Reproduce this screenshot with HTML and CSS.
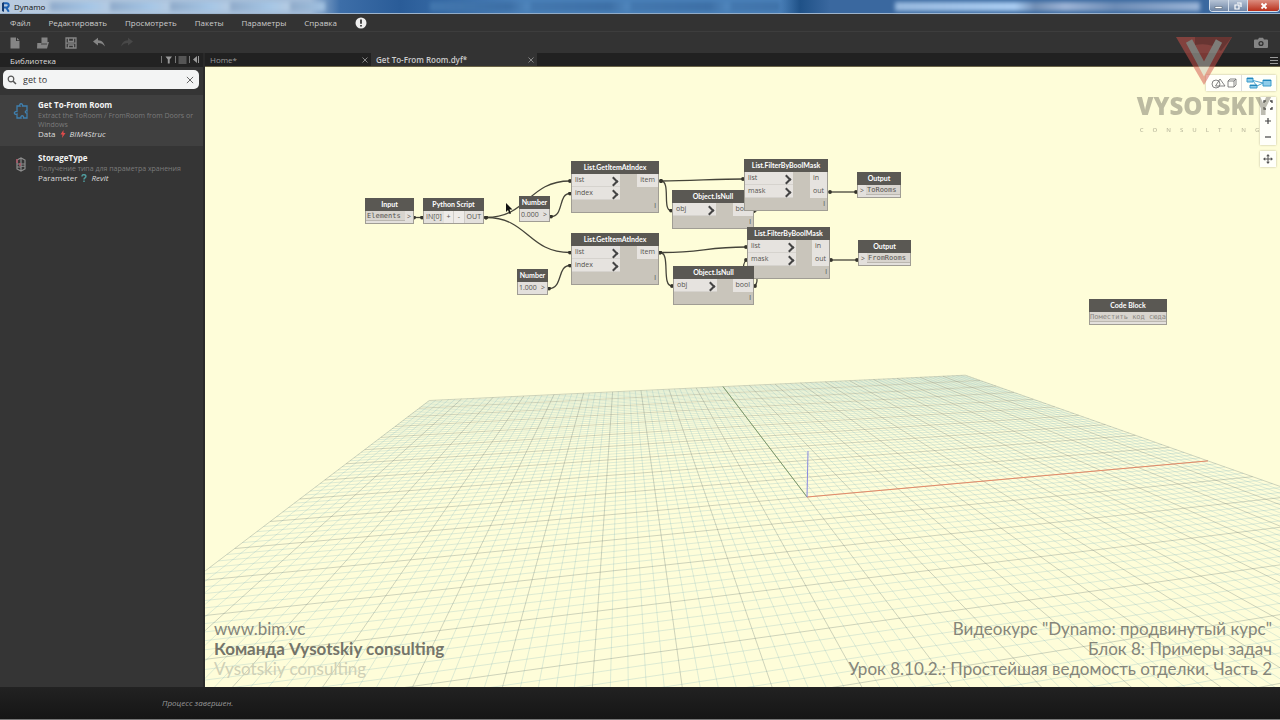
FILE: index.html
```
<!DOCTYPE html>
<html lang="ru">
<head>
  <meta charset="UTF-8">
  <title>Dynamo</title>
  <link rel="stylesheet" href="styles.css">
</head>
<body>
  <header class="titlebar">
    <svg class="app-icon" viewBox="0 0 10 12"><path d="M1 2l2-1v10l-2-1z" fill="#123a72"/><path d="M3 2.2h2.6a2 2 0 0 1 0 4.3H3M5.2 6.5l2.6 4.3" fill="none" stroke="#1d62b4" stroke-width="2"/></svg>
    <span class="app-name">Dynamo</span>
    <span class="glass glass-left"></span>
    <span class="glass glass-mid"></span>
    <span class="glass glass-right"></span>
    <div class="win-buttons">
      <button aria-label="Свернуть"><svg viewBox="0 0 10 8"><path d="M1 4.5h7v2H1z" fill="#fff" stroke="#456" stroke-width=".5"/></svg></button>
      <button aria-label="Развернуть"><svg viewBox="0 0 10 8"><path d="M4 1h4v4M2 3h4v4H2z" fill="none" stroke="#fff" stroke-width="1.2"/></svg></button>
      <button class="close" aria-label="Закрыть"><svg viewBox="0 0 10 8"><path d="M2.5 1.5l5 5M7.5 1.5l-5 5" stroke="#fff" stroke-width="1.8"/></svg></button>
    </div>
  </header>

  <nav class="menu">
    <a href="#">Файл</a>
    <a href="#">Редактировать</a>
    <a href="#">Просмотреть</a>
    <a href="#">Пакеты</a>
    <a href="#">Параметры</a>
    <a href="#">Справка</a>
    <a href="#" class="alert" aria-label="Уведомления"><svg viewBox="0 0 12 12"><circle cx="6" cy="6" r="5.5" fill="#eee"/><path d="M6 2.5v4.2M6 8v1.6" stroke="#222" stroke-width="1.6"/></svg></a>
  </nav>

  <div class="toolbar">
    <button aria-label="Создать"><svg viewBox="0 0 12 12"><path d="M1.5.5H7v3.5h3.5v7.500h-9z"/><path d="M8 .8l2.5 2.400H8z"/></svg></button>
    <button aria-label="Открыть"><svg viewBox="0 0 12 12"><path d="M4.500.500h6V5H12l-2 6.500H0L.300 6H4.500z"/><path d="M4 7h6" stroke="#333" stroke-width=".8"/></svg></button>
    <button aria-label="Сохранить"><svg viewBox="0 0 12 12"><path d="M1 1h10v10H1zM3.5 1v3.500h5V1M1 6.200h10M3.500 11V8h5v3" fill="none" stroke="#858585" stroke-width="1.3"/></svg></button>
    <button aria-label="Отменить"><svg viewBox="0 0 12 12"><path d="M0 4.500L5 .800v2.500c4 .200 6 2.500 7 6.200C10 7 8 6 5 6v2.500z"/></svg></button>
    <button class="off" aria-label="Повторить"><svg viewBox="0 0 12 12"><path d="M12 4.500L7 .800v2.500C3 3.500 1 5.800 0 9.500 2 7 4 6 7 6v2.500z"/></svg></button>
    <button class="camera" aria-label="Снимок"><svg viewBox="0 0 14 12"><path d="M1 2.500h3l1-1.800h4l1 1.800h3q1 0 1 1V10q0 1-1 1H1q-1 0-1-1V3.500q0-1 1-1z"/><circle cx="7" cy="6.5" r="2.6" fill="#333"/><circle cx="7" cy="6.5" r="1.2"/></svg></button>
  </div>

  <div class="main">
    <aside class="library">
      <div class="library-head">
        <h2>Библиотека</h2>
        <svg class="head-icons" viewBox="0 0 40 10">
          <path d="M1.5 1v7M15.5 1v7M29.5 1v7" stroke="#777" fill="none"/>
          <path d="M5.5 1.5h6.500L9.700 4.500V8.500H7.800V4.500z" fill="#999"/>
          <path d="M18.5 2h8M18.5 4h8M18.5 6h8M18.5 8h8" stroke="#888" fill="none"/>
          <path d="M37 1v7l-4-3.500zM38 1h1v7h-1z" fill="#999"/>
        </svg>
      </div>
      <label class="search">
        <svg viewBox="0 0 10 10"><circle cx="4" cy="4" r="2.8" fill="none" stroke="#555" stroke-width="1.2"/><path d="M6 6l3 3" stroke="#555" stroke-width="1.5"/></svg>
        <input type="text" value="get to" aria-label="Поиск">
        <button aria-label="Очистить"><svg viewBox="0 0 8 8"><path d="M1.5 1.5l5 5M6.5 1.5l-5 5" stroke="#666" stroke-width=".8"/></svg></button>
      </label>
      <ul class="results">
        <li class="selected">
          <svg class="thumb" viewBox="0 0 18 18"><path d="M5 4h3c-1.500-3 3.500-3 2.500 0H15v5c-2-1-2.500 2.500 0 2V16h-3.500c1-3-3.500-3-2.500 0H5v-4C2 13.500 1 9 5 9.500z" fill="none" stroke="#3f7fae" stroke-width="1.3"/></svg>
          <div>
            <h3>Get To-From Room</h3>
            <p class="descr">Extract the ToRoom / FromRoom from Doors or Windows</p>
            <p class="source">Data <svg viewBox="0 0 6 8"><path d="M3.500 0L.500 4.500h2L2 8l3.500-5H3.500z" fill="#e24b4b"/></svg> <i>BIM4Struc</i></p>
          </div>
        </li>
        <li>
          <svg class="thumb" viewBox="0 0 18 18"><path d="M5 5l4-2 4 2v9l-4 2-4-2zM9 3v13M5 9h8M5 12l8-1" fill="none" stroke="#8d8d8d" stroke-width="1.2"/><path d="M5 4v4M8 8v3" stroke="#b05567" stroke-width="1.5"/></svg>
          <div>
            <h3>StorageType</h3>
            <p class="descr">Получение типа для параметра хранения</p>
            <p class="source">Parameter <svg viewBox="0 0 6 8"><path d="M1 2.500C1-.500 5.500.500 4.800 2.800 4.500 4 3 3.800 3 5.500M3 6.500V8" fill="none" stroke="#4f9a9c" stroke-width="1.5"/></svg> <i>Revit</i></p>
          </div>
        </li>
      </ul>
    </aside>

    <section class="work">
      <div class="tabs">
        <div class="tab">Home*<button aria-label="Закрыть Home"><svg viewBox="0 0 8 8"><path d="M1.5 1.5l5 5M6.5 1.5l-5 5" stroke="#888"/></svg></button></div>
        <div class="tab active">Get To-From Room.dyf*<button aria-label="Закрыть Get To-From Room"><svg viewBox="0 0 8 8"><path d="M1.5 1.5l5 5M6.5 1.5l-5 5" stroke="#888"/></svg></button></div>
        <button class="tab-menu" aria-label="Вкладки"><svg viewBox="0 0 8 8"><path d="M0 1.5h8M0 4.5h8M0 7.5h8" stroke="#999"/></svg></button>
      </div>

      <div class="canvas">
        <svg class="grid" id="grid" viewBox="205 67 1075 620" preserveAspectRatio="xMidYMid slice"></svg>

        <svg class="wires">
          <defs>
            <marker id="dot" viewBox="0 0 4 4" refX="2" refY="2" markerWidth="4" markerHeight="4" markerUnits="userSpaceOnUse"><circle cx="2" cy="2" r="1.9" fill="#35342c"/></marker>
          </defs>
          <g transform="translate(-205 -67)">
            <path d="M414 217.5H422"/>
            <path d="M486 217.5C528 217.5 528 181 570 181"/>
            <path d="M486 217.5C528 217.5 528 252.5 570 252.5"/>
            <path d="M551 216.5C564 216.5 558 193.5 570 193.5"/>
            <path d="M549 288.5C563 288.5 557 265.5 570 265.5"/>
            <path d="M661 181C690 181 716 179 743 179"/>
            <path d="M661 181C671 181 662 210.5 671 210.5"/>
            <path d="M660 252.5C700 253 706 247 746 247"/>
            <path d="M660 252.5C671 252.5 661 286 672 286"/>
            <path d="M754 211C768 211 730 192 743 192"/>
            <path d="M755 286C765 270 735 276 746 260"/>
            <path d="M830 192H856"/>
            <path d="M831 260H857"/>
          </g>
        </svg>

        <div class="node n-input">
          <h4>Input</h4>
          <div class="row"><input class="code" value="Elements" aria-label="Input"><span class="port">&gt;</span></div>
        </div>
        <div class="node n-python">
          <h4>Python Script</h4>
          <div class="row"><span class="port">IN[0]</span><button>+</button><button>-</button><span class="port">OUT</span></div>
        </div>
        <div class="node n-number1">
          <h4>Number</h4>
          <div class="row"><input class="num" value="0.000" aria-label="Number"><span class="port">&gt;</span></div>
        </div>
        <div class="node n-number2">
          <h4>Number</h4>
          <div class="row"><input class="num" value="1.000" aria-label="Number"><span class="port">&gt;</span></div>
        </div>
        <div class="node n-item1">
          <h4>List.GetItemAtIndex</h4>
          <div class="ports">
            <ul class="in"><li>list</li><li>index</li></ul>
            <ul class="out"><li>item</li></ul>
          </div>
          <span class="lacing">l</span>
        </div>
        <div class="node n-item2">
          <h4>List.GetItemAtIndex</h4>
          <div class="ports">
            <ul class="in"><li>list</li><li>index</li></ul>
            <ul class="out"><li>item</li></ul>
          </div>
          <span class="lacing">l</span>
        </div>
        <div class="node n-null1">
          <h4>Object.IsNull</h4>
          <div class="ports">
            <ul class="in"><li>obj</li></ul>
            <ul class="out"><li>bool</li></ul>
          </div>
          <span class="lacing">l</span>
        </div>
        <div class="node n-mask1">
          <h4>List.FilterByBoolMask</h4>
          <div class="ports">
            <ul class="in"><li>list</li><li>mask</li></ul>
            <ul class="out"><li>in</li><li>out</li></ul>
          </div>
          <span class="lacing">l</span>
        </div>
        <div class="node n-mask2">
          <h4>List.FilterByBoolMask</h4>
          <div class="ports">
            <ul class="in"><li>list</li><li>mask</li></ul>
            <ul class="out"><li>in</li><li>out</li></ul>
          </div>
          <span class="lacing">l</span>
        </div>
        <div class="node n-null2">
          <h4>Object.IsNull</h4>
          <div class="ports">
            <ul class="in"><li>obj</li></ul>
            <ul class="out"><li>bool</li></ul>
          </div>
          <span class="lacing">l</span>
        </div>
        <div class="node n-output1">
          <h4>Output</h4>
          <div class="row"><span class="port">&gt;</span><input class="code" value="ToRooms" aria-label="Output"></div>
        </div>
        <div class="node n-output2">
          <h4>Output</h4>
          <div class="row"><span class="port">&gt;</span><input class="code" value="FromRooms" aria-label="Output"></div>
        </div>
        <div class="node n-code">
          <h4>Code Block</h4>
          <div class="row"><input class="code hint" value="Поместить код сюда" aria-label="Code Block"></div>
        </div>

        <svg class="cursor" viewBox="0 0 8 12"><path d="M1 0v9l2-2 1.500 4 1.500-.600L4.500 6.500H7.500z" fill="#111"/></svg>

        <div class="view-controls">
          <div class="view-switch">
            <button aria-label="3D"><svg viewBox="0 0 26 12"><g fill="none" stroke="#666" stroke-width=".8"><circle cx="5" cy="7" r="4"/><path d="M9 2l5 7H4.500zM17 4h6v6h-6zM17 4l2-2h6v6l-2 2M23 4l2-2"/></g></svg></button>
            <button aria-label="Граф"><svg viewBox="0 0 26 12"><path d="M7 3.500L17 6M7 4l4 5 6-3" fill="none" stroke="#4aa3cf"/><path d="M1 1h6v4H1zM4 8h7v3H4zM17 3h8v6h-8z" fill="#8fcdea" stroke="#3b9bcb"/><path d="M1 1.5h6M4 8.5h7M17 3.5h8" stroke="#2288bd"/></svg></button>
          </div>
          <div class="zoom">
            <button aria-label="По размеру"><svg viewBox="0 0 10 10"><path d="M1 3V1h2M7 1h2v2M9 7v2H7M3 9H1V7" fill="none" stroke="#444" stroke-width="1.3"/></svg></button>
            <button aria-label="Увеличить"><svg viewBox="0 0 10 10"><path d="M5 2v6M2 5h6" stroke="#444" stroke-width="1.2"/></svg></button>
            <button aria-label="Уменьшить"><svg viewBox="0 0 10 10"><path d="M2 5h6" stroke="#444" stroke-width="1.2"/></svg></button>
          </div>
          <div class="pan">
            <button aria-label="Панорама"><svg viewBox="0 0 10 10"><path d="M5 1v8M1 5h8" stroke="#555"/><path d="M5 0l1.800 2.200H3.200zM5 10l1.800-2.200H3.200zM0 5l2.200-1.800v3.600zM10 5L7.800 3.200v3.600z" fill="#555"/></svg></button>
          </div>
        </div>

        <div class="caption left">
          <a href="#">www.bim.vc</a>
          <b>Команда Vysotskiy consulting</b>
          <span class="faded">Vysotskiy consulting</span>
        </div>
        <div class="caption right">
          <span>Видеокурс "Dynamo: продвинутый курс"</span>
          <span>Блок 8: Примеры задач</span>
          <span>Урок 8.10.2.: Простейшая ведомость отделки. Часть 2</span>
        </div>
      </div>
    </section>
  </div>

  <footer class="status">Процесс завершен.</footer>

  <div class="watermark">
    <svg viewBox="0 0 58 48"><path d="M1 0h56L29 48z" fill="#d0524a"/><path d="M20 0h37L46 14q-10-9-26-6z" fill="#9c3832"/><path d="M14 4l15 28L44 4" fill="none" stroke="#c9c6bd" stroke-width="7"/></svg>
    <strong>VYSOTSKIY</strong>
    <small>CONSULTING</small>
  </div>

  <script src="grid.js"></script>
</body>
</html>
```
FILE: grid.js
```
// perspective ground grid: 20 x 20 big cells, 5 small ones in each
const grid = document.getElementById("grid");
const origin = [807, 497];
const vanishX = [3486, 256];
const vanishY = [622, 254];
const kx = 0.0176;
const ky = 0.0832;

function project(x, y) {
  const w = 1 + kx * x + ky * y;
  return [0, 1].map(i => ((origin[i] + kx * x * vanishX[i] + ky * y * vanishY[i]) / w).toFixed(1));
}

function line(x1, y1, x2, y2) {
  return `M${project(x1, y1)}L${project(x2, y2)}`;
}

function addPath(d, cls) {
  const path = document.createElementNS("http://www.w3.org/2000/svg", "path");
  path.setAttribute("d", d);
  path.setAttribute("class", cls);
  grid.appendChild(path);
}

let minor = "";
let major = "";
for (let i = -50; i <= 50; i++) {
  const v = i / 5;
  // cut the lines off before they get behind the camera
  const yStart = Math.max(-10, (-0.9 - kx * v) / ky);
  const xStart = Math.max(-10, (-0.9 - ky * v) / kx);
  const d = line(v, yStart, v, 10) + line(xStart, v, 10, v);
  if (i % 5 === 0) {
    major += d;
  } else {
    minor += d;
  }
}

addPath(minor, "minor");
addPath(major, "major");
addPath(line(0, 0, 0, 10), "axis-y");
addPath(line(0, 0, 10, 0), "axis-x");
addPath("M807 497L808 451", "axis-z");
```
FILE: styles.css
```
* { box-sizing: border-box; }

body {
  margin: 0;
  height: 100vh;
  display: flex;
  flex-direction: column;
  background: #333;
  color: #ccc;
  font-family: "Open Sans", "Noto Sans", sans-serif;
  font-size: 8px;
  overflow: hidden;
  position: relative;
}

h2, h3, h4, p, ul { margin: 0; padding: 0; }
ul { list-style: none; }
a { color: inherit; text-decoration: none; }
svg { display: block; }

button {
  border: 0;
  padding: 0;
  background: none;
  font: inherit;
  color: inherit;
  display: flex;
  align-items: center;
  justify-content: center;
}

input {
  border: 0;
  padding: 0;
  min-width: 0;
  background: none;
  font: inherit;
  color: inherit;
  outline: none;
}

/* title bar */
.titlebar {
  flex: none;
  height: 14px;
  display: flex;
  align-items: center;
  position: relative;
  background: linear-gradient(90deg, #b9cbdf 0, #a3bcd8 310px, #3d6ea8 340px, #2a5c98 400px, #4a80b9 520px, #4a80b9 780px, #1f5187 800px, #3a689f 830px, #3a689f 100%);
  border-bottom: 1px solid #9db4cd;
}
.app-icon { width: 10px; height: 12px; margin-left: 1px; }
.app-name { margin-left: 3px; color: #111; z-index: 1; }
.glass { position: absolute; top: 2px; height: 9px; filter: blur(2px); }
.glass-left { left: 50px; width: 275px; background: repeating-linear-gradient(90deg, #8faac9 0, #a5c6e6 40px, #b5cbe2 60px); }
.glass-mid { left: 430px; width: 350px; background: repeating-linear-gradient(90deg, #4377ae 0, #3d6fa5 80px, #5288bf 100px); }
.glass-right { right: 80px; width: 305px; background: linear-gradient(90deg, #98b9de 0, #aacdf2 120px, #728fb5 140px, #9db4d6 170px, #6e8db6 220px, #9bb5d7 100%); }
.win-buttons {
  display: flex;
  margin-left: auto;
  align-self: flex-start;
  height: 12px;
  border: 1px solid #d4dfec;
  border-top: 0;
  border-radius: 0 0 4px 4px;
  overflow: hidden;
}
.win-buttons button { width: 19px; background: linear-gradient(#b7c4d6, #6f86a6); border-right: 1px solid #d4dfec; }
.win-buttons .close { width: 31px; background: linear-gradient(#dc8e80, #b9301c); border: 0; }
.win-buttons svg { width: 10px; height: 8px; }

/* menu + toolbar */
.menu {
  flex: none;
  height: 18px;
  padding-left: 10px;
  display: flex;
  align-items: center;
  gap: 18px;
  background: #333;
  border-bottom: 1px solid #3d3d3d;
}
.menu svg { width: 12px; height: 12px; }
.toolbar {
  flex: none;
  height: 21px;
  padding: 0 12px 0 9px;
  display: flex;
  align-items: center;
  gap: 16px;
}
.toolbar svg { width: 12px; height: 12px; fill: #858585; }
.toolbar .off svg { fill: #484848; }
.toolbar .camera { margin-left: auto; }
.toolbar .camera svg { width: 14px; }

.main { flex: 1; display: flex; min-height: 0; }

/* library */
.library { flex: none; width: 205px; border-right: 2px solid #2a2a2a; background: #353535; }
.library-head {
  height: 14px;
  padding: 0 3px 0 10px;
  display: flex;
  align-items: center;
  justify-content: space-between;
  background: #222;
}
.library-head h2 { font-size: 8px; font-weight: 400; color: #ddd; }
.head-icons { width: 40px; height: 10px; }
.search {
  display: flex;
  align-items: center;
  gap: 6px;
  height: 19px;
  margin: 3px 4px 6px 3px;
  padding: 0 4px;
  border-radius: 5px;
  background: #f3f4f4;
  color: #333;
  font-size: 9px;
}
.search > svg { width: 10px; height: 10px; }
.search input { flex: 1; }
.search button svg { width: 10px; height: 10px; }

.results li {
  display: flex;
  gap: 8px;
  padding: 4px 6px 8px 12px;
  margin-bottom: 2px;
  line-height: 9px;
}
.results .selected { background: #404040; }
.thumb { flex: none; width: 18px; height: 18px; margin-top: 3px; }
.results h3 { font-size: 8px; line-height: 12px; font-weight: 700; color: #f2f2f2; }
.descr { font-size: 7px; color: #7b7b7b; }
.source { display: flex; align-items: center; gap: 4px; color: #ddd; }
.source svg { width: 6px; height: 8px; }

/* tabs */
.work { flex: 1; min-width: 0; display: flex; flex-direction: column; }
.tabs { flex: none; height: 14px; display: flex; background: #212121; border-bottom: 1px solid #6a6345; }
.tab {
  width: 166px;
  padding: 0 2px 0 5px;
  display: flex;
  align-items: center;
  justify-content: space-between;
  color: #999;
}
.tab svg { width: 8px; height: 8px; }
.tab.active { background: #333; color: #ccc; font-weight: 600; }
.tab-menu { margin-left: auto; margin-right: 2px; }
.tab-menu svg { width: 8px; height: 8px; }

/* canvas */
.canvas { flex: 1; position: relative; overflow: hidden; background: #fefdd9; }
.grid, .wires { position: absolute; left: 0; top: 0; width: 100%; height: 100%; }
.grid path { fill: none; stroke-width: 1; }
.grid .minor { stroke: rgba(105, 170, 185, 0.22); }
.grid .major { stroke: rgba(105, 125, 120, 0.32); }
.grid .axis-y { stroke: #7d9a6c; }
.grid .axis-x { stroke: #e58a68; }
.grid .axis-z { stroke: #8a8ae0; }
.wires path {
  fill: none;
  stroke: #45443a;
  stroke-width: 1.3;
  marker-start: url(#dot);
  marker-end: url(#dot);
}

/* nodes */
.node {
  position: absolute;
  border: 1px solid #a09d94;
  border-top: 0;
  background: #c9c5bb;
  color: #55534e;
  font-size: 7px;
  line-height: 12px;
  min-height: 26px;
}
.node h4 {
  height: 13px;
  margin: 0 -1px;
  line-height: 13px;
  font-family: Lato, "Open Sans", sans-serif;
  font-size: 7px;
  font-weight: 700;
  text-align: center;
  white-space: nowrap;
  color: #fff;
  background: #5a5853;
}
.row { display: flex; height: 12px; background: #e3e0dc; }
.row .port { padding: 0 2px; }
.row button { flex: 1; background: #eeebe8; border-right: 1px solid #cfccc7; }
.row input { flex: 1; width: 10px; padding: 0 1px; }
.row .code {
  font-family: "DejaVu Sans Mono", monospace;
  height: 10px;
  background: #d8d4ce;
  border-bottom: 1px solid #bbb7b0;
}
.row .hint { color: #8a8782; padding: 0; }
.ports { display: flex; justify-content: space-between; align-items: flex-start; }
.ports li { height: 13px; padding: 0 3px; background: #e6e3df; }
.in { width: 48px; }
.in li { display: flex; justify-content: space-between; border-bottom: 1px solid #d6d3ce; }
.in li::after {
  content: "";
  width: 5px;
  height: 5px;
  margin-top: 4px;
  border: solid #444;
  border-width: 2px 2px 0 0;
  transform: rotate(45deg);
}
.lacing { display: block; height: 12px; padding-right: 2px; text-align: right; }

.n-input { left: 160px; top: 131px; width: 49px; }
.n-python { left: 218px; top: 131px; width: 61px; }
.n-number1 { left: 314px; top: 129px; width: 31px; }
.n-number2 { left: 312px; top: 202px; width: 31px; }
.n-item1 { left: 366px; top: 94px; width: 88px; }
.n-item2 { left: 366px; top: 166px; width: 88px; }
.n-null1 { left: 467px; top: 123px; width: 82px; }
.n-null2 { left: 468px; top: 199px; width: 81px; }
.n-mask1 { left: 539px; top: 92px; width: 84px; }
.n-mask2 { left: 542px; top: 160px; width: 83px; }
.n-output1 { left: 652px; top: 105px; width: 44px; }
.n-output2 { left: 653px; top: 173px; width: 53px; }
.n-code { left: 884px; top: 232px; width: 78px; }
.n-null1 .in, .n-null2 .in { width: 43px; }

.cursor { position: absolute; left: 300px; top: 136px; width: 8px; height: 12px; }

/* view buttons over the canvas */
.view-controls {
  position: absolute;
  top: 8px;
  right: 4px;
  display: flex;
  flex-direction: column;
  align-items: flex-end;
  gap: 6px;
}
.view-switch, .zoom, .pan { display: flex; background: #fffffa; box-shadow: 0 0 2px #bbb89d; }
.view-switch button { width: 35px; height: 16px; }
.view-switch button + button { border-left: 1px solid #ddd; }
.view-switch svg { width: 26px; height: 12px; }
.zoom { flex-direction: column; }
.zoom button, .pan button { width: 16px; height: 16px; }
.zoom svg, .pan svg { width: 10px; height: 10px; }

/* captions */
.caption {
  position: absolute;
  bottom: 8px;
  display: flex;
  flex-direction: column;
  font-family: Lato, "Open Sans", sans-serif;
  font-size: 17px;
  line-height: 20px;
  color: #85857a;
}
.caption.left { left: 9px; }
.caption.right { right: 8px; text-align: right; }
.caption b { color: #747469; }
.caption .faded { color: #cfd0b6; }

.status {
  flex: none;
  height: 33px;
  padding-left: 162px;
  line-height: 32px;
  font-style: italic;
  color: #999;
  background: linear-gradient(#222, #151515);
  border-bottom: 1px solid #777;
}

/* studio logo */
.watermark {
  position: absolute;
  top: 37px;
  right: 11px;
  width: 130px;
  display: flex;
  flex-direction: column;
  align-items: center;
  opacity: 0.5;
  pointer-events: none;
  color: #7d7b6a;
}
.watermark svg { width: 58px; height: 48px; }
.watermark strong { margin-top: 6px; font-size: 24px; line-height: 30px; font-weight: 800; }
.watermark small { margin-top: 5px; font-size: 6px; line-height: 8px; font-weight: 600; letter-spacing: 9px; }
```
